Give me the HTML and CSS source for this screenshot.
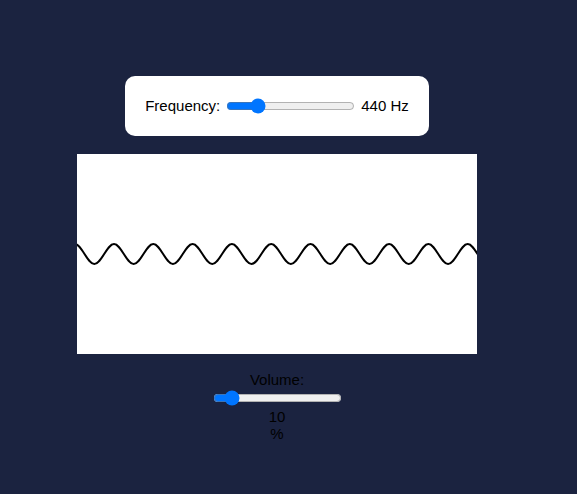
FILE: index.html
```html
<!DOCTYPE html>
<html>
<head>
<meta charset="utf-8">
<link rel="stylesheet" href="styles.css">
</head>
<body>
<div class="page">
  <div class="card">
    <label class="label" for="freq">Frequency:</label>
    <input class="range" id="freq" type="range" min="20" max="2000" value="440">
    <span class="value">440 Hz</span>
  </div>
  <div class="scope">
    <svg width="400" height="200" viewBox="0 0 400 200">
      <path class="wave" d="M -2.3 90 c 7.16 0 12.49 20 19.65 20 s 12.49 -20 19.65 -20 s 12.49 20 19.65 20 s 12.49 -20 19.65 -20 s 12.49 20 19.65 20 s 12.49 -20 19.65 -20 s 12.49 20 19.65 20 s 12.49 -20 19.65 -20 s 12.49 20 19.65 20 s 12.49 -20 19.65 -20 s 12.49 20 19.65 20 s 12.49 -20 19.65 -20 s 12.49 20 19.65 20 s 12.49 -20 19.65 -20 s 12.49 20 19.65 20 s 12.49 -20 19.65 -20 s 12.49 20 19.65 20 s 12.49 -20 19.65 -20 s 12.49 20 19.65 20 s 12.49 -20 19.65 -20 s 12.49 20 19.65 20 s 12.49 -20 19.65 -20"/>
    </svg>
  </div>
  <div class="volume">
    <label class="label" for="vol">Volume:</label>
    <input class="range vrange" id="vol" type="range" min="0" max="100" value="10">
    <span>10</span>
    <span>%</span>
  </div>
</div>
</body>
</html>
```

FILE: styles.css
```css
html, body {
  margin: 0;
  padding: 0;
  background: #1b2340;
  height: 100%;
}
body {
  font-family: "Liberation Sans", Arial, sans-serif;
  font-size: 15px;
  line-height: 17px;
  color: #000;
}
.page {
  display: flex;
  flex-direction: column;
  align-items: center;
  padding: 76px 23px 0 0;
}
.card {
  display: flex;
  align-items: center;
  gap: 6px;
  background: #fff;
  border-radius: 10px;
  padding: 21px 20px 22px 20px;
}
.range {
  margin: 0;
  width: 129px;
  height: 16px;
}
.scope {
  margin-top: 18px;
  width: 400px;
  height: 200px;
  background: #fff;
}
.scope svg {
  display: block;
}
.wave {
  fill: none;
  stroke: #000;
  stroke-width: 2;
}
.volume {
  margin-top: 17px;
  display: flex;
  flex-direction: column;
  align-items: center;
}
.vrange {
  margin: 2px 0;
}
```
